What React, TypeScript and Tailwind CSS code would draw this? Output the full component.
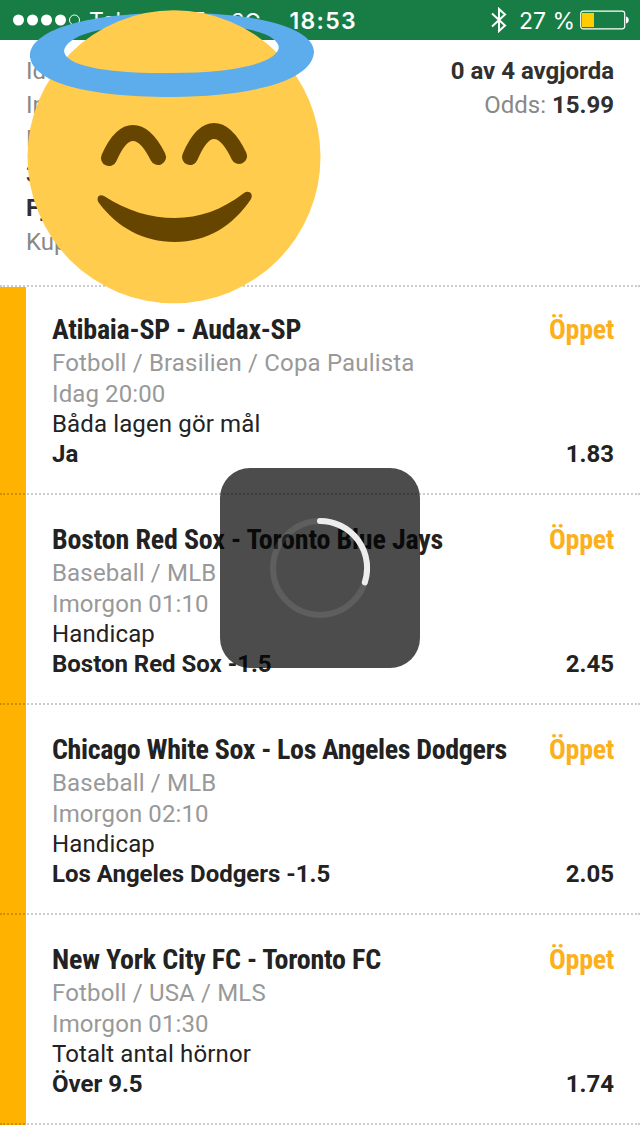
import React from 'react';
import { clsx } from 'clsx';

interface Bet {
  match: string;
  tracking: string;
  league: string;
  time: string;
  market: string;
  pick: string;
  odds: string;
}

const bets: Bet[] = [
  {
    match: 'Atibaia-SP - Audax-SP',
    tracking: 'tracking-[-0.27px]',
    league: 'Fotboll / Brasilien / Copa Paulista',
    time: 'Idag 20:00',
    market: 'Båda lagen gör mål',
    pick: 'Ja',
    odds: '1.83',
  },
  {
    match: 'Boston Red Sox - Toronto Blue Jays',
    tracking: 'tracking-[-0.18px]',
    league: 'Baseball / MLB',
    time: 'Imorgon 01:10',
    market: 'Handicap',
    pick: 'Boston Red Sox -1.5',
    odds: '2.45',
  },
  {
    match: 'Chicago White Sox - Los Angeles Dodgers',
    tracking: 'tracking-[-0.35px]',
    league: 'Baseball / MLB',
    time: 'Imorgon 02:10',
    market: 'Handicap',
    pick: 'Los Angeles Dodgers -1.5',
    odds: '2.05',
  },
  {
    match: 'New York City FC - Toronto FC',
    tracking: 'tracking-[-0.2px]',
    league: 'Fotboll / USA / MLS',
    time: 'Imorgon 01:30',
    market: 'Totalt antal hörnor',
    pick: 'Över 9.5',
    odds: '1.74',
  },
];

const StatusBar = () => (
  <header className="flex h-10 items-center justify-between bg-[#177d45] pl-[13px] pr-[10px] font-[Inter,sans-serif] text-[23px] leading-10 text-white">
    <div className="flex flex-1 items-center whitespace-nowrap">
      <svg className="mr-2 h-3 w-[68px]" viewBox="0 0 68 12">
        {[5.5, 19.5, 33.5, 47.5].map((cx) => (
          <circle key={cx} cx={cx} cy="6" r="5.5" fill="white" />
        ))}
        <circle cx="61.5" cy="6" r="5" fill="none" stroke="white" />
      </svg>
      <span className="w-[142px] pt-0.5">Telenor SE</span>
      <span className="pt-0.5 text-[22px]">3G</span>
    </div>
    <div className="w-[64px] pt-0.5 font-semibold tracking-[1.3px]">18:53</div>
    <div className="flex flex-1 items-center justify-end">
      <svg className="mr-3 h-[26px] w-4" viewBox="0 0 16 26" fill="none" stroke="white" strokeWidth="2">
        <path d="M1 6.5 14 18.5 8 24V2L14 7.5 1 19.5" />
      </svg>
      <span className="mr-[5px] pt-0.5">27 %</span>
      <svg className="h-5 w-[50px]" viewBox="0 0 50 20">
        <rect x="0.7" y="1.2" width="44" height="17.6" rx="2.5" fill="none" stroke="white" strokeWidth="1.2" />
        <rect x="2" y="3" width="12" height="14" fill="#ffcc00" />
        <path d="M46 6.5a3.6 3.6 0 0 1 0 7z" fill="white" />
      </svg>
    </div>
  </header>
);

const CouponSummary = () => (
  <section className="flex h-[245px] justify-between px-[26px] pt-3.5 leading-[34px] text-[#888]">
    <div>
      <p>Idag 18:52</p>
      <p>Insats: 100</p>
      <p>Möjlig vinst</p>
      <p className="mt-px font-bold text-[#303030]">3 system</p>
      <p className="font-bold text-[#303030]">Fyrling</p>
      <p>Kupong</p>
    </div>
    <div className="text-right">
      <p className="font-bold text-[#303030]">0 av 4 avgjorda</p>
      <p>
        Odds: <b className="text-[#303030]">15.99</b>
      </p>
    </div>
  </section>
);

const BetRow = ({ bet, first }: { bet: Bet; first: boolean }) => (
  <li
    className={clsx(
      'border-t-2 border-dotted border-black/20 bg-[linear-gradient(to_right,#ffb300_26px,transparent_26px)] pb-6 pl-[52px] pr-[26px] last:border-b-2',
      first ? 'bg-clip-padding pt-[25px]' : 'pt-[27px]'
    )}
  >
    <div className="flex justify-between font-['Roboto_Condensed',Roboto,sans-serif] text-[28px] font-bold leading-[35px] [font-stretch:75%]">
      <h2 className={clsx('whitespace-nowrap', bet.tracking)}>{bet.match}</h2>
      <span className="tracking-[-0.33px] text-[#fbb01c]">Öppet</span>
    </div>
    <p className="pt-px leading-[31px] tracking-[0.17px] text-[#999]">{bet.league}</p>
    <p className="leading-[31px] tracking-[0.1px] text-[#999]">{bet.time}</p>
    <p className="-mt-px leading-[30px] tracking-[0.13px]">{bet.market}</p>
    <div className="flex justify-between font-bold leading-[30px]">
      <span className="tracking-[-0.02px]">{bet.pick}</span>
      <span>{bet.odds}</span>
    </div>
  </li>
);

const Spinner = () => (
  <div className="absolute left-[220px] top-[468px] flex size-[200px] items-center justify-center rounded-[30px] bg-black/70">
    <svg className="size-[100px]" viewBox="0 0 100 100" fill="none" strokeWidth="6">
      <circle cx="50" cy="50" r="47" stroke="white" strokeOpacity="0.1" />
      <path d="M50 3A47 47 0 0 1 94.8 64.5" stroke="#ededed" strokeLinecap="round" />
    </svg>
  </div>
);

const HaloFace = () => (
  <svg className="absolute left-0 top-0 h-[310px] w-[330px]" viewBox="0 0 330 310">
    {/* back of the halo */}
    <path
      d="M30 58V55C31 32 80 13 172 13C262 12 314 29 314 52L279 48C278 34 250 24 172 24C100 24 65 36 64 52V58Z"
      fill="#5dadec"
    />
    <circle cx="174" cy="156.8" r="146.5" fill="#ffcc4d" />
    {/* front of the halo */}
    <path
      d="M30 55C30 80 80 97 172 97C262 96 314 78 314 51L279 46C279 63 235 73 172 73C108 74 65 66 64 51Z"
      fill="#5dadec"
    />
    <g fill="none" stroke="#664500" strokeWidth="16" strokeLinecap="round" strokeLinejoin="round">
      <path d="M109 158Q120 133 133 133Q146 133 158 157" />
      <path d="M190 157Q201 131 214 131Q227 131 239 156" />
    </g>
    <path
      d="M104 196C98 193 96 199 99 203C117 227 143 242 175 242C207 242 233 226 251 199C254 193 248 190 244 193C222 210 199 218 175 218C151 218 127 211 104 196Z"
      fill="#664500"
    />
  </svg>
);

export default function App() {
  return (
    <main className="relative h-[1136px] w-[640px] overflow-hidden bg-white font-[Roboto,sans-serif] text-[24px] text-[#222]">
      <StatusBar />
      <CouponSummary />
      <ul>
        {bets.map((bet, i) => (
          <BetRow key={bet.match} bet={bet} first={i === 0} />
        ))}
      </ul>
      <HaloFace />
      <Spinner />
    </main>
  );
}
